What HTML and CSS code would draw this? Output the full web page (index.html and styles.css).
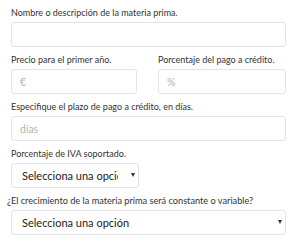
FILE: index.html
```html
<!DOCTYPE html>
<html lang="es">
<head>
  <meta charset="UTF-8" />
  <title>Materia prima</title>
  <link rel="stylesheet" href="styles.css">
</head>
<body>
  <form class="form">
    <div class="group">
      <label class="label">Nombre o descripción de la materia prima.</label>
      <input class="field" type="text">
    </div>

    <div class="row">
      <div class="group">
        <label class="label">Precio para el primer año.</label>
        <input class="field" type="text" placeholder="€">
      </div>
      <div class="group">
        <label class="label">Porcentaje del pago a crédito.</label>
        <input class="field" type="text" placeholder="%">
      </div>
    </div>

    <div class="group">
      <label class="label">Especifique el plazo de pago a crédito, en días.</label>
      <input class="field" type="text" placeholder="días">
    </div>

    <div class="group">
      <label class="label">Porcentaje de IVA soportado.</label>
      <div class="select-wrap half">
        <select class="field select">
          <option>Selecciona una opción</option>
        </select>
      </div>
    </div>

    <div class="group">
      <label class="label small">¿El crecimiento de la materia prima será constante o variable?</label>
      <div class="select-wrap">
        <select class="field select">
          <option>Selecciona una opción</option>
        </select>
      </div>
    </div>
  </form>
</body>
</html>
```

FILE: styles.css
```css
body {
  margin: 0;
  padding: 6px 14px 0 11px;
  background: #fff;
  font-family: Lato, "Open Sans", sans-serif;
  color: #333;
}
.group {
  margin-bottom: 6px;
}
.label {
  display: block;
  font-size: 9px;
  line-height: 14px;
  margin-bottom: 2px;
  white-space: nowrap;
}
.label.small {
  font-size: 9.2px;
  margin-left: -4px;
}
.row {
  display: grid;
  grid-template-columns: 126px 128px;
  column-gap: 21px;
}
.field {
  display: block;
  box-sizing: border-box;
  width: 100%;
  height: 25px;
  margin: 0;
  padding: 0 8px;
  border: 1px solid #e4e4e4;
  border-radius: 3px;
  background: #fff;
  font-family: inherit;
  font-size: 10.5px;
  color: #333;
  outline: none;
}
.field::placeholder {
  color: #b3b3b3;
}
.select-wrap {
  position: relative;
}
.select-wrap.half {
  width: 128px;
}
.select {
  -webkit-appearance: none;
  appearance: none;
  padding: 0 20px 0 10px;
  font-size: 11px;
  color: #222;
}
.select-wrap::after {
  content: "";
  position: absolute;
  top: 10px;
  right: 4.5px;
  border-left: 2.5px solid transparent;
  border-right: 2.5px solid transparent;
  border-top: 4px solid #333;
  pointer-events: none;
}
```
